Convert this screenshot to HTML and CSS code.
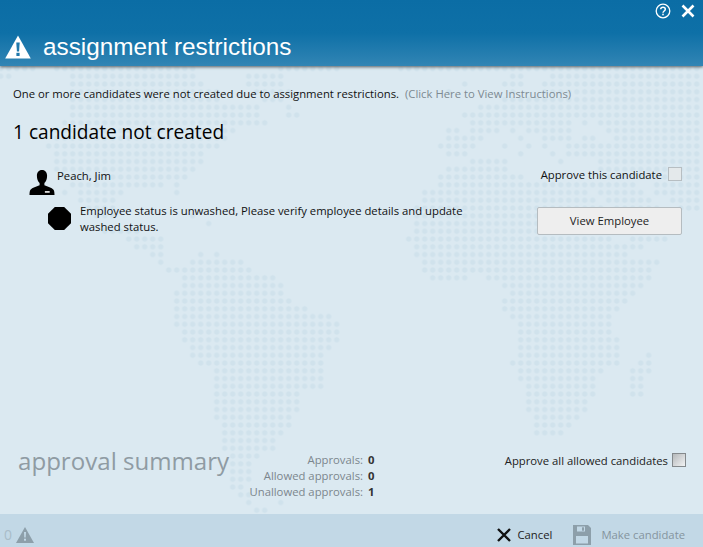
FILE: index.html
```html
<!DOCTYPE html>
<html lang="en">
<head>
<meta charset="utf-8">
<title>assignment restrictions</title>
<link rel="stylesheet" href="styles.css">
</head>
<body>
<div class="dialog">
  <header class="header">
    <div class="window-tools">
      <svg class="tool-icon" viewBox="0 0 16 16" aria-label="Help"><circle cx="8" cy="8" r="6.8" fill="none" stroke="#fff" stroke-width="1.3"/><path d="M5.7 6.3C5.8 4.9 6.8 4.2 8 4.2c1.300 0 2.300.8 2.300 2 0 1.800-2.300 1.800-2.300 3.600" fill="none" stroke="#fff" stroke-width="1.500"/><rect x="7.200" y="10.700" width="1.600" height="1.600" fill="#fff"/></svg>
      <svg class="tool-icon" viewBox="0 0 16 16" aria-label="Close"><path d="M2.500 2.500l11 11M13.500 2.500l-11 11" stroke="#fff" stroke-width="2.600" fill="none"/></svg>
    </div>
    <div class="title-row">
      <svg class="title-icon" viewBox="0 0 26 24"><path d="M13 .5L25.800 23.500H.2z" fill="#fff"/><path d="M11.300 7.500h3.400l-.6 9h-2.200z" fill="#1f78ab"/><rect x="11.400" y="17.800" width="3.200" height="3.200" fill="#1f78ab"/></svg>
      <h1 class="title">assignment restrictions</h1>
    </div>
  </header>

  <main class="main">
    <svg class="world-map" viewBox="0 0 703 547" aria-hidden="true">
      <defs>
        <pattern id="dots" patternUnits="userSpaceOnUse" width="1" height="1"><ellipse cx=".5" cy=".5" rx=".33" ry=".34" fill="#d0e2ec"/></pattern>
      </defs>
      <g transform="translate(-3.300 56.900) scale(8 7.750)">
        <path fill="url(#dots)" d="M0 1h5v1h-5zM7 1h18v1h-18zM35 1h8v1h-8zM50 1h38v1h-38zM0 2h2v1h-2zM9 2h16v1h-16zM31 2h5v1h-5zM64 2h2v1h-2zM69 2h19v1h-19zM9 3h17v1h-17zM31 3h5v1h-5zM58 3h1v1h-1zM63 3h3v1h-3zM68 3h20v1h-20zM9 4h19v1h-19zM32 4h5v1h-5zM56 4h1v1h-1zM64 4h1v1h-1zM68 4h20v1h-20zM9 5h19v1h-19zM33 5h3v1h-3zM63 5h25v1h-25zM9 6h24v1h-24zM36 6h1v1h-1zM60 6h28v1h-28zM9 7h24v1h-24zM36 7h2v1h-2zM58 7h30v1h-30zM8 8h26v1h-26zM59 8h13v1h-13zM73 8h1v1h-1zM75 8h13v1h-13zM7 9h23v1h-23zM56 9h2v1h-2zM59 9h4v1h-4zM64 9h1v1h-1zM66 9h6v1h-6zM76 9h12v1h-12zM7 10h22v1h-22zM56 10h5v1h-5zM65 10h1v1h-1zM68 10h4v1h-4zM73 10h2v1h-2zM77 10h11v1h-11zM6 11h22v1h-22zM55 11h5v1h-5zM63 11h1v1h-1zM66 11h1v1h-1zM68 11h1v1h-1zM71 11h17v1h-17zM7 12h19v1h-19zM56 12h3v1h-3zM65 12h1v1h-1zM69 12h1v1h-1zM71 12h17v1h-17zM7 13h19v1h-19zM59 13h5v1h-5zM70 13h1v1h-1zM75 13h13v1h-13zM7 14h18v1h-18zM56 14h8v1h-8zM75 14h13v1h-13zM8 15h16v1h-16zM55 15h11v1h-11zM75 15h13v1h-13zM9 16h12v1h-12zM22 16h1v1h-1zM55 16h25v1h-25zM82 16h6v1h-6zM8 17h1v1h-1zM10 17h6v1h-6zM22 17h1v1h-1zM53 17h21v1h-21zM75 17h6v1h-6zM82 17h6v1h-6zM10 18h5v1h-5zM53 18h22v1h-22zM76 18h6v1h-6zM84 18h4v1h-4zM11 19h4v1h-4zM52 19h24v1h-24zM77 19h6v1h-6zM85 19h3v1h-3zM12 20h3v1h-3zM24 20h1v1h-1zM52 20h24v1h-24zM26 21h1v1h-1zM52 21h24v1h-24zM13 22h5v1h-5zM52 22h25v1h-25zM16 23h5v1h-5zM51 23h26v1h-26zM79 23h5v1h-5zM17 24h4v1h-4zM52 24h29v1h-29zM19 25h2v1h-2zM25 25h1v1h-1zM27 25h1v1h-1zM52 25h27v1h-27zM20 26h1v1h-1zM24 26h7v1h-7zM53 26h30v1h-30zM21 27h11v1h-11zM53 27h29v1h-29zM23 28h12v1h-12zM54 28h5v1h-5zM61 28h21v1h-21zM23 29h13v1h-13zM63 29h18v1h-18zM22 30h14v1h-14zM64 30h16v1h-16zM22 31h15v1h-15zM63 31h16v1h-16zM22 32h17v1h-17zM63 32h15v1h-15zM22 33h20v1h-20zM64 33h13v1h-13zM22 34h21v1h-21zM65 34h12v1h-12zM23 35h20v1h-20zM65 35h12v1h-12zM23 36h20v1h-20zM65 36h13v1h-13zM24 37h18v1h-18zM65 37h13v1h-13zM24 38h17v1h-17zM65 38h13v1h-13zM81 38h1v1h-1zM25 39h16v1h-16zM64 39h14v1h-14zM80 39h2v1h-2zM27 40h14v1h-14zM65 40h11v1h-11zM79 40h3v1h-3zM27 41h14v1h-14zM65 41h10v1h-10zM79 41h2v1h-2zM27 42h14v1h-14zM66 42h9v1h-9zM79 42h2v1h-2zM27 43h11v1h-11zM66 43h9v1h-9zM79 43h2v1h-2zM27 44h11v1h-11zM66 44h8v1h-8zM27 45h11v1h-11zM66 45h8v1h-8zM27 46h10v1h-10zM67 46h6v1h-6zM28 47h9v1h-9zM67 47h5v1h-5zM28 48h8v1h-8zM67 48h4v1h-4zM28 49h7v1h-7zM28 50h7v1h-7zM29 51h4v1h-4zM29 52h3v1h-3zM29 53h3v1h-3zM29 54h3v1h-3zM29 55h2v1h-2zM30 56h2v1h-2zM31 57h1v1h-1zM35 57h1v1h-1zM32 58h2v1h-2z"/>
      </g>
    </svg>

    <section class="top">
      <p class="intro">One or more candidates were not created due to assignment restrictions. <a class="instructions">(Click Here to View Instructions)</a></p>
      <h2 class="count">1 candidate not created</h2>
      <div class="candidate">
        <svg class="person" viewBox="0 0 26 26"><path d="M13 0c3.500 0 5.300 2.600 5.300 6 0 3-1 6-2.800 7.500v2.300c3.500 1.500 7.500 2.200 9.500 4.700.8 1 1 3.500 1 5.500H0c0-2 .2-4.500 1-5.500 2-2.500 6-3.200 9.500-4.700v-2.300C8.700 12 7.700 9 7.700 6 7.700 2.600 9.500 0 13 0z" fill="#000"/><rect x="16" y="22" width="5" height="1.600" fill="#fff"/></svg>
        <span class="name">Peach, Jim</span>
        <label class="approve-one">Approve this candidate<span class="check"></span></label>
      </div>
      <div class="reason">
        <svg class="stop" viewBox="0 0 23 23"><path d="M6.800 0h9.400L23 6.800v9.400L16.200 23H6.800L0 16.200V6.800z" fill="#000"/></svg>
        <p class="reason-text">Employee status is unwashed, Please verify employee details and update washed status.</p>
        <button class="view-btn" type="button">View Employee</button>
      </div>
    </section>

    <section class="summary">
      <h3 class="summary-title">approval summary</h3>
      <dl class="stats">
        <div class="stat"><dt>Approvals:</dt><dd>0</dd></div>
        <div class="stat"><dt>Allowed approvals:</dt><dd>0</dd></div>
        <div class="stat"><dt>Unallowed approvals:</dt><dd>1</dd></div>
      </dl>
      <label class="approve-all">Approve all allowed candidates<span class="check check-all"></span></label>
    </section>
  </main>

  <footer class="footer">
    <div class="alerts">
      <span class="alert-count">0</span>
      <svg class="alert-icon" viewBox="0 0 18 16"><path d="M9 0l9 16H0z" fill="#8d9faa"/><path d="M8 5h2l-.3 5.500H8.300z" fill="#c2d8e6"/><rect x="8" y="11.700" width="2" height="2" fill="#c2d8e6"/></svg>
    </div>
    <div class="actions">
      <button class="action" type="button">
        <svg class="cancel-icon" viewBox="0 0 14 14"><path d="M1 1l12 12M13 1L1 13" stroke="#111" stroke-width="2.400" fill="none"/></svg>
        Cancel
      </button>
      <button class="action disabled" type="button">
        <svg class="save-icon" viewBox="0 0 18 20"><path d="M0 0h15l3 3v17H0z" fill="#8d9faa"/><rect x="4" y="1.500" width="8" height="5" fill="#c2d8e6"/><rect x="9" y="2.300" width="2" height="3.400" fill="#8d9faa"/><rect x="3" y="11" width="12" height="7.500" fill="#c2d8e6"/></svg>
        Make candidate
      </button>
    </div>
  </footer>
</div>
</body>
</html>
```
FILE: styles.css
```css
* { box-sizing: border-box; }
html, body { margin: 0; height: 100%; }
body { font-family: "Open Sans", "Noto Sans", sans-serif; font-size: 11.3px; color: #111; overflow: hidden; background: #dbe9f1; }
.dialog { width: 703px; height: 547px; display: flex; flex-direction: column; }

.header { position: relative; z-index: 2; height: 66px; flex: none; background: linear-gradient(#0b6da5 0, #0e70a7 50%, #3285b4 100%); box-shadow: 0 1px 3px #555c60; display: flex; flex-direction: column; }
.window-tools { display: flex; justify-content: flex-end; align-items: center; gap: 9px; height: 22px; padding-right: 7px; }
.tool-icon { width: 16px; height: 16px; display: block; }
.title-row { display: flex; align-items: center; gap: 12px; padding: 12px 0 0 5px; }
.title-icon { width: 26px; height: 24px; display: block; }
.title { margin: 0; font: 400 24.3px/26px "Liberation Sans", Arial, sans-serif; color: #fff; }

.main { position: relative; flex: 1; display: flex; flex-direction: column; justify-content: space-between; min-height: 0; }
.world-map { position: absolute; left: 0; top: -66px; width: 703px; height: 547px; }
.top, .summary { position: relative; }

.intro { margin: 0; padding: 20px 0 0 13px; line-height: 15px; }
.instructions { margin-left: 3px; color: #7d8a92; }
.count { margin: 18px 0 0 13px; font-size: 19.1px; font-weight: 400; line-height: 26px; color: #000; }

.candidate { display: flex; align-items: flex-start; margin-top: 25px; padding: 0 21px 0 29px; }
.person { width: 26px; height: 25px; display: block; }
.name { margin: -2px 0 0 2px; line-height: 15px; }
.approve-one { margin-left: auto; display: flex; align-items: flex-start; line-height: 15px; margin-top: -3px; }
.check { width: 14px; height: 14px; margin-left: 6px; background: #e4e9eb; border: 1px solid #b7bec2; }

.reason { display: flex; align-items: flex-start; margin-top: 12px; padding: 0 21px 0 48px; }
.stop { width: 23px; height: 23px; display: block; flex: none; }
.reason-text { margin: -4px 0 0 9px; width: 400px; line-height: 16px; }
.view-btn { margin-left: auto; width: 145px; height: 28px; font: inherit; color: #222; background: #eee; border: 1px solid #b5bcc0; border-radius: 2px; padding: 0 0 2px; }

.summary { display: flex; align-items: flex-start; height: 62px; padding: 0 17px 0 18px; }
.summary-title { margin: -7px 0 0; flex: none; white-space: nowrap; font-size: 24.1px; font-weight: 400; line-height: 32px; color: #8f9ba3; width: 211px; }
.stats { margin: 0; flex: none; display: flex; flex-direction: column; align-items: flex-end; width: 146px; color: #7b868d; }
.stat { display: flex; line-height: 16px; }
.stat dt { text-align: right; }
.stat dd { margin: 0 0 0 5px; width: 7px; font-weight: 700; color: #333; }
.approve-all { margin: 1px 0 0 auto; display: flex; align-items: flex-start; line-height: 15px; color: #222; }
.check-all { margin-left: 4px; background: linear-gradient(135deg, #b5b8ba, #f1f3f4); border: 1px solid #84898c; }

.footer { flex: none; height: 33px; background: #c2d8e6; display: flex; align-items: center; justify-content: space-between; padding: 8px 18px 0 4px; }
.alerts { display: flex; align-items: center; gap: 4px; }
.alert-count { font-size: 14px; color: #a9bcc8; }
.alert-icon { width: 18px; height: 16px; display: block; }
.actions { display: flex; align-items: center; gap: 21px; }
.action { display: flex; align-items: center; gap: 6px; padding: 0; border: 0; background: none; font: inherit; color: #222; }
.action.disabled { color: #85949e; gap: 10px; }
.cancel-icon { width: 14px; height: 14px; display: block; }
.save-icon { width: 18px; height: 20px; display: block; }
```
